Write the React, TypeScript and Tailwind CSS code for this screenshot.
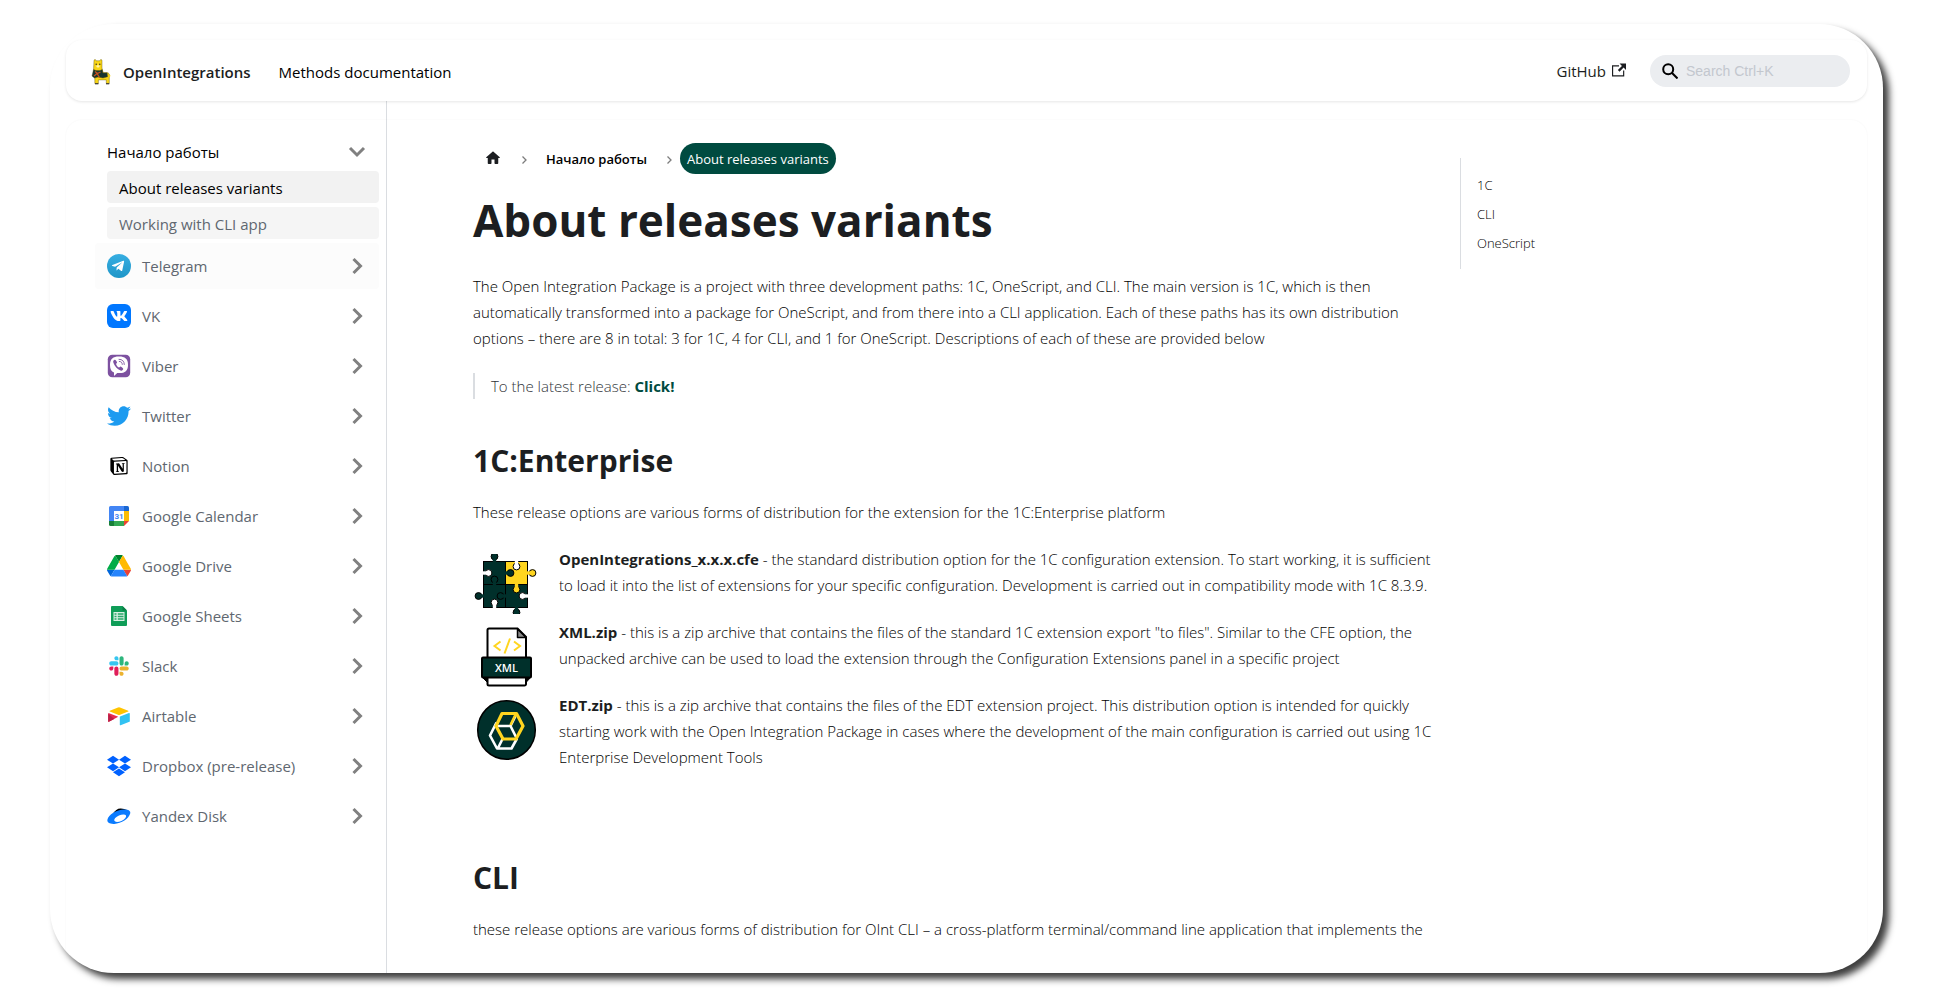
import type { ReactNode } from "react";
import { FaDropbox, FaTelegramPlane, FaTwitter, FaViber, FaVk } from "react-icons/fa";
import { SiNotion } from "react-icons/si";

const DARK = "#00302b";
const YELLOW = "#ffd51f";

function Llama() {
  return (
    <svg viewBox="0 0 20 26" className="h-[26px] w-5" aria-hidden="true">
      <g stroke="#5a4f0a" strokeWidth=".4">
        <path d="M3 1.200l1.200-.9L5 1.800h4l.8-1.500 1.200.9V9l1 4.500 5 .3 1.300 1.200v9.500h-3v-3.600H7.400v3.600H3.800V16L2.600 10z" fill="#f9d616" />
        <path d="M2.500 10.500l2.500 1h4l2.200-1 .8 3.500 4.100-.2.500 4-4.600 1.200-5-1L3.400 19 1 17z" fill="#17352f" />
      </g>
      <path d="M4 12.500l2.500 2 3-1.500M3 17l3-2.500 2.500 4" stroke="#c8501f" strokeWidth="1.300" fill="none" />
      <circle cx="5.200" cy="5.200" r=".7" fill="#222" />
      <circle cx="8.800" cy="5.200" r=".7" fill="#222" />
      <rect x="5.400" y="6.200" width="3.200" height="2.400" rx="1.100" fill="#fff3ae" />
      <path d="M17.800 15.500l1.700 1-.8 2-1.400-.5z" fill="#f7d416" />
      <path d="M4 24.800h3.400M15 24.800h3.200" stroke="#222" strokeWidth="1" />
    </svg>
  );
}

const box = "h-6 w-6 shrink-0";

const icons: Record<string, ReactNode> = {
  Telegram: (
    <span className="flex h-6 w-6 items-center justify-center rounded-full bg-gradient-to-b from-[#37aee2] to-[#1e96c8]">
      <FaTelegramPlane className="mr-0.5 h-3.5 w-3.5 text-white" />
    </span>
  ),
  VK: (
    <span className="flex h-6 w-6 items-center justify-center rounded-md bg-[#0077ff]">
      <FaVk className="h-[18px] w-[18px] text-white" />
    </span>
  ),
  Viber: (
    <svg viewBox="0 0 24 24" className={box}>
      <rect x=".8" y=".8" width="22.400" height="22.400" rx="4.500" fill="#7d51a0" />
      <path d="M12 2.600c-6 0-9 2.400-9 8.400 0 4.300 1.400 6.400 4 7.500v3.400l3.200-3c7 .7 10.800-1.400 10.800-8C21 5 18 2.600 12 2.600z" fill="#fff" />
      <path d="M7.600 5.800c-1.300.7-1.700 1.600-1.200 3 1.300 3.600 3.800 6.300 7.200 7.700 1.200.5 2-.1 2.600-1.300.4-.8-1.700-2.400-2.500-2.700-.8-.2-1 1.100-1.700 1-1.500-.6-2.700-2.100-2.900-3.500 0-.7 1.200-.8.9-1.700-.3-.9-1.500-2.900-2.400-2.500z" fill="#7d51a0" />
      <path d="M12 5.300c3.300 0 5.200 1.800 5.300 5.200M12.300 7.400c1.900.1 2.900 1.100 3 3" stroke="#7d51a0" strokeWidth=".9" fill="none" strokeLinecap="round" />
    </svg>
  ),
  Twitter: <FaTwitter className="h-6 w-6 text-[#1d9bf0]" />,
  Notion: (
    <span className="flex h-6 w-6 items-center justify-center">
      <SiNotion className="h-[18px] w-[18px] text-black" />
    </span>
  ),
  "Google Calendar": (
    <svg viewBox="0 0 24 24" className={box}>
      <path d="M3.500 2H17v5H7v10H2V3.500A1.500 1.500 0 0 1 3.500 2z" fill="#4285f4" />
      <path d="M17 2h3.500A1.500 1.500 0 0 1 22 3.500V7h-5z" fill="#1967d2" />
      <path d="M17 7h5v10h-5z" fill="#fbbc04" />
      <path d="M7 17h10v5H7z" fill="#34a853" />
      <path d="M2 17h5v5H3.500A1.500 1.500 0 0 1 2 20.500z" fill="#188038" />
      <path d="M17 17h5l-5 5z" fill="#ea4335" />
      <path d="M7 7h10v10H7z" fill="#fff" />
      <text x="12" y="15" textAnchor="middle" fontSize="8" fontWeight="700" fontFamily="Roboto, sans-serif" fill="#4285f4">31</text>
    </svg>
  ),
  "Google Drive": (
    <svg viewBox="0 -4 87.3 87.3" className={box}>
      <path d="m6.600 66.850 3.850 6.650c.8 1.400 1.950 2.500 3.300 3.300l13.750-23.800h-27.500c0 1.550.4 3.100 1.200 4.500z" fill="#0066da" />
      <path d="m43.650 25-13.750-23.800c-1.350.8-2.500 1.900-3.300 3.300l-25.400 44a9.060 9.060 0 0 0-1.200 4.500h27.500z" fill="#00ac47" />
      <path d="m73.550 76.800c1.350-.8 2.500-1.900 3.300-3.300l1.600-2.750 7.650-13.250c.8-1.400 1.200-2.950 1.200-4.500h-27.502l5.852 11.500z" fill="#ea4335" />
      <path d="m43.650 25 13.750-23.800c-1.350-.8-2.900-1.200-4.500-1.200h-18.500c-1.600 0-3.150.45-4.500 1.200z" fill="#00832d" />
      <path d="m59.800 53h-32.300l-13.750 23.800c1.350.8 2.900 1.200 4.500 1.200h50.800c1.600 0 3.150-.45 4.500-1.200z" fill="#2684fc" />
      <path d="m73.400 26.500-12.700-22c-.8-1.400-1.950-2.500-3.300-3.300l-13.750 23.800 16.150 28h27.450c0-1.550-.4-3.100-1.200-4.500z" fill="#ffba00" />
    </svg>
  ),
  "Google Sheets": (
    <svg viewBox="0 0 24 24" className={box}>
      <path d="M5 2h10.500L20 6.500V21a1 1 0 0 1-1 1H5a1 1 0 0 1-1-1V3a1 1 0 0 1 1-1z" fill="#0f9d58" />
      <path d="M15.500 2L20 6.500h-4.500z" fill="#0b7f46" />
      <path d="M6.500 8h11v9h-11z" fill="#d9efe3" />
      <path d="M7.500 9.300h2v1.500h-2zM10.800 9.300h5.700v1.500h-5.700zM7.500 11.800h2v1.500h-2zM10.800 11.800h5.700v1.500h-5.700zM7.500 14.300h2v1.500h-2zM10.800 14.300h5.700v1.500h-5.700z" fill="#2aa86b" />
    </svg>
  ),
  Slack: (
    <svg viewBox="-14 -14 151 151" className={box}>
      <path d="M25.800 77.600c0 7.100-5.800 12.900-12.900 12.900S0 84.700 0 77.600s5.800-12.900 12.900-12.900h12.900v12.900zm6.500 0c0-7.100 5.800-12.900 12.900-12.900s12.900 5.800 12.900 12.900v32.300c0 7.100-5.800 12.900-12.900 12.900s-12.900-5.800-12.900-12.900V77.600z" fill="#e01e5a" />
      <path d="M45.200 25.800c-7.100 0-12.900-5.800-12.900-12.900S38.100 0 45.200 0s12.900 5.800 12.900 12.900v12.900H45.200zm0 6.500c7.100 0 12.900 5.800 12.900 12.900s-5.800 12.900-12.900 12.900H12.900C5.800 58.100 0 52.300 0 45.200s5.800-12.900 12.900-12.900h32.300z" fill="#36c5f0" />
      <path d="M97 45.200c0-7.100 5.800-12.900 12.900-12.900s12.900 5.800 12.900 12.900-5.800 12.900-12.900 12.900H97V45.200zm-6.500 0c0 7.100-5.800 12.900-12.900 12.900s-12.900-5.800-12.900-12.900V12.900C64.700 5.800 70.500 0 77.600 0s12.900 5.800 12.900 12.900v32.300z" fill="#2eb67d" />
      <path d="M77.600 97c7.100 0 12.900 5.800 12.900 12.900s-5.800 12.900-12.900 12.900-12.900-5.800-12.900-12.900V97h12.900zm0-6.500c-7.100 0-12.900-5.800-12.900-12.900s5.800-12.900 12.900-12.900h32.300c7.100 0 12.900 5.800 12.900 12.900s-5.800 12.900-12.900 12.900H77.600z" fill="#ecb22e" />
    </svg>
  ),
  Airtable: (
    <svg viewBox="0 0 24 24" className={box}>
      <path d="M2.800 6.700L11 3.500a3 3 0 0 1 2 0l8.200 3.200c.5.200.5.600 0 .8L13 10.800a3 3 0 0 1-2 0L2.800 7.500c-.5-.2-.5-.6 0-.8z" fill="#ffc400" />
      <path d="M13 12.600l9-3.500c.4-.1.800.1.800.5v7.600c0 .3-.1.500-.4.600l-8.800 3.400c-.4.200-.8-.1-.8-.5v-7.500c0-.3 0-.5.200-.6z" fill="#31c2f2" />
      <path d="M10.800 13L1.900 17.700c-.4.200-.7-.1-.7-.5V9.700c0-.5.400-.7.900-.5l8.600 3.300c.3.100.3.300.1.500z" fill="#e8294f" />
      <path d="M7.200 14.900L1.400 18l-.2-.8V9.700z" fill="#ba1e45" />
    </svg>
  ),
  "Dropbox (pre-release)": <FaDropbox className="h-[26px] w-6 text-[#0061ff]" />,
  "Yandex Disk": (
    <svg viewBox="0 0 24 24" className={box}>
      <path d="M6 9.500c2-3 4.500-5.100 7.800-5 2.700 0 4.200.8 6.200 1.600L10 14z" fill="#000" />
      <path d="M.4 15.800c1.200-5 9-10 16.500-10.200 4.500-.1 7 1.400 6.300 4-1.300 5-8.700 10-16 10.300C2.600 20.100 0 18.400.4 15.800z" fill="#0a7bff" />
      <ellipse cx="13.200" cy="14.200" rx="6.400" ry="3" transform="rotate(-24 13.200 14.200)" fill="#fff" />
    </svg>
  ),
};

function Chevron({ open = false }: { open?: boolean }) {
  return (
    <svg viewBox="0 0 24 24" className="h-6 w-6 shrink-0" fill="none" stroke="#808080" strokeWidth="3" aria-hidden="true">
      <path d={open ? "M5 8l7 7 7-7" : "M8.500 5l7 7-7 7"} />
    </svg>
  );
}

function Crumb() {
  return (
    <svg viewBox="0 0 22 12" className="mt-0.5 h-3 w-[22px]" fill="none" stroke="#7c7c7c" strokeWidth="1.300" aria-hidden="true">
      <path d="M9.500 2.500l3.500 3.500-3.500 3.500" />
    </svg>
  );
}

function Knob({ x, y, dx, dy, fill }: { x: number; y: number; dx: number; dy: number; fill: string }) {
  const cx = x + dx * 5;
  const cy = y + dy * 5;
  return (
    <g>
      <circle cx={cx} cy={cy} r="3.400" fill={fill} stroke="#000" strokeWidth="1" />
      <rect
        x={x + dx - (dx ? 2.2 : 1.7)}
        y={y + dy - (dy ? 2.2 : 1.7)}
        width={dx ? 4.4 : 3.4}
        height={dy ? 4.4 : 3.4}
        fill={fill}
      />
    </g>
  );
}

function PuzzleIcon() {
  return (
    <svg viewBox="0 0 64 60" className="h-[60px] w-16" aria-hidden="true">
      <rect x="10.500" y="7.500" width="44" height="46" fill={DARK} stroke="#000" />
      <rect x="32.500" y="7.500" width="22" height="23" fill={YELLOW} stroke="#000" />
      <path d="M10.500 30.500h44M32.500 30.500v23" stroke="#000" />
      <Knob x={21.500} y={7.500} dx={0} dy={-1} fill={DARK} />
      <Knob x={54.500} y={19} dx={1} dy={0} fill={YELLOW} />
      <Knob x={32.500} y={19} dx={1} dy={0} fill={DARK} />
      <Knob x={43.500} y={30.500} dx={0} dy={1} fill={YELLOW} />
      <Knob x={21.500} y={30.500} dx={0} dy={-1} fill={DARK} />
      <Knob x={32.500} y={42} dx={-1} dy={0} fill={DARK} />
      <Knob x={10.500} y={42} dx={-1} dy={0} fill={DARK} />
      <Knob x={43.500} y={53.500} dx={0} dy={1} fill={DARK} />
      <Knob x={10.500} y={19} dx={1} dy={0} fill="#fff" />
      <Knob x={43.500} y={7.500} dx={0} dy={1} fill="#fff" />
      <Knob x={54.500} y={42} dx={-1} dy={0} fill="#fff" />
      <Knob x={21.500} y={53.500} dx={0} dy={-1} fill="#fff" />
    </svg>
  );
}

function XmlIcon() {
  return (
    <svg viewBox="0 0 64 60" className="h-[60px] w-16" aria-hidden="true">
      <path d="M16 1.500h28.500l8.500 8.500V57a1.500 1.500 0 0 1-1.500 1.500H16A1.500 1.500 0 0 1 14.500 57V3A1.500 1.500 0 0 1 16 1.500z" fill="#fff" stroke="#000" strokeWidth="2" />
      <path d="M44.500 2v8.500H53z" fill="#8a8a8a" stroke="#000" strokeWidth="1.500" strokeLinejoin="round" />
      <path d="M9 50h5.500v5.500zM58 50h-5v5.500z" fill="#000" stroke="#000" />
      <rect x="9" y="30.500" width="49" height="20" rx="1" fill={DARK} stroke="#000" strokeWidth="2" />
      <path d="M27.500 14.500l-6 4.500 6 4.500M41 14.500l6 4.500-6 4.500M37 11.500l-5.500 15" fill="none" stroke={YELLOW} strokeWidth="2" />
      <text x="33.500" y="44.500" textAnchor="middle" fontSize="11" fontWeight="600" fontFamily="Open Sans, sans-serif" fill="#fff">XML</text>
    </svg>
  );
}

function EdtIcon() {
  return (
    <svg viewBox="0 0 64 60" className="h-[60px] w-16" aria-hidden="true">
      <ellipse cx="33.500" cy="30" rx="28.800" ry="29.200" fill={DARK} stroke="#000" strokeWidth="1.500" />
      <g fill="none" strokeWidth="3.200" strokeLinejoin="round">
        <path d="M23.500 22.500l-6.500 13 7 13h14.500l5.500-10M24 26h13.500l5.500 11M30 38l-5 10M37.500 26l5-10" stroke="#fff" strokeWidth="2.600" />
        <path d="M29 13.500h14.500l6.500 12.500-7 13H30L23 26z" stroke={YELLOW} />
        <path d="M43 13.500L37.500 25" stroke={YELLOW} strokeWidth="2.500" />
      </g>
    </svg>
  );
}

const services = Object.keys(icons);

const releases = [
  {
    name: "OpenIntegrations_x.x.x.cfe",
    icon: <PuzzleIcon />,
    text: " - the standard distribution option for the 1C configuration extension. To start working, it is sufficient to load it into the list of extensions for your specific configuration. Development is carried out in compatibility mode with 1C 8.3.9.",
  },
  {
    name: "XML.zip",
    icon: <XmlIcon />,
    text: " - this is a zip archive that contains the files of the standard 1C extension export \"to files\". Similar to the CFE option, the unpacked archive can be used to load the extension through the Configuration Extensions panel in a specific project",
  },
  {
    name: "EDT.zip",
    icon: <EdtIcon />,
    text: " - this is a zip archive that contains the files of the EDT extension project. This distribution option is intended for quickly starting work with the Open Integration Package in cases where the development of the main configuration is carried out using 1C Enterprise Development Tools",
  },
];

function Header() {
  return (
    <header className="relative z-10 flex h-[61px] shrink-0 items-center justify-between rounded-2xl bg-white pr-[17px] pl-[25px] shadow-[0_1px_3px_rgba(0,0,0,0.1)]">
      <div className="flex items-center pt-0.5">
        <a href="#" className="flex items-center gap-3 font-semibold text-[#1c1e21]">
          <Llama />
          OpenIntegrations
        </a>
        <a href="#methods" className="ml-7 text-black">Methods documentation</a>
      </div>
      <div className="flex items-center gap-6">
        <a href="#github" className="flex items-center gap-1.5 font-medium text-[#1c1e21]">
          GitHub
          <svg viewBox="0 0 24 24" className="mb-0.5 h-3.5 w-3.5" fill="currentColor" aria-hidden="true">
            <path d="M21 13v10h-21v-19h12v2h-10v15h17v-8h2zm3-12h-10.988l4.035 4-6.977 7.070 2.828 2.828 6.977-7.070 4.125 4.172v-11z" />
          </svg>
        </a>
        <label className="flex h-8 w-[200px] items-center gap-2 rounded-full bg-[#ebedf0] pr-2 pl-3">
          <svg viewBox="0 0 16 16" className="h-4 w-4 shrink-0" fill="none" stroke="#000" strokeWidth="2" aria-label="Search">
            <circle cx="6.200" cy="6.200" r="5" />
            <path d="M9.800 9.800l5.700 5.700" />
          </svg>
          <input
            type="search"
            placeholder="Search Ctrl+K"
            className="w-full min-w-0 bg-transparent font-['Liberation_Sans',sans-serif] text-sm outline-none placeholder:text-[#c3c7ce]"
          />
        </label>
      </div>
    </header>
  );
}

function Sidebar() {
  return (
    <nav className="w-[321px] shrink-0 border-r border-[#dadde1] pt-9 pr-[7px] pl-[29px]">
      <ul className="flex flex-col gap-1">
        <li>
          <button type="button" className="flex h-[30px] w-full items-center justify-between pr-2.5 pl-3 text-black">
            Начало работы
            <Chevron open />
          </button>
          <ul className="mt-1 ml-3 flex flex-col gap-1">
            <li>
              <a href="#about" className="flex h-8 items-center rounded bg-[#f2f2f2] px-3 pt-0.5 text-black">About releases variants</a>
            </li>
            <li>
              <a href="#cli-app" className="flex h-8 items-center rounded bg-[#f5f5f5] px-3 pt-0.5 text-[#606770]">Working with CLI app</a>
            </li>
          </ul>
        </li>
        {services.map((name, i) => (
          <li key={name}>
            <button
              type="button"
              className={`flex h-[46px] w-full items-center rounded pr-2.5 pl-3 text-[#606770] ${i === 0 ? "bg-[#fcfcfc]" : ""}`}
            >
              {icons[name]}
              <span className="ml-[11px] flex-1 text-left">{name}</span>
              <Chevron />
            </button>
          </li>
        ))}
      </ul>
    </nav>
  );
}

function Article() {
  return (
    <article className="font-light text-black">
      <nav aria-label="Breadcrumbs" className="flex h-[31px] items-center text-[13px]">
        <a href="#" aria-label="Home" className="flex w-10 justify-center text-[#1c1e21]">
          <svg viewBox="0 0 24 24" className="mb-0.5 h-[18px] w-[18px]" fill="currentColor">
            <path d="M10 19v-5h4v5c0 .55.45 1 1 1h3c.55 0 1-.45 1-1v-7h1.700c.46 0 .68-.57.33-.87L12.670 3.600c-.38-.34-.96-.34-1.340 0l-8.360 7.530c-.34.3-.13.87.33.87H5v7c0 .55.45 1 1 1h3c.55 0 1-.45 1-1z" />
          </svg>
        </a>
        <Crumb />
        <a href="#start" className="px-[11px] font-semibold text-black">Начало работы</a>
        <Crumb />
        <span className="flex h-[31px] items-center rounded-full bg-[#004b40] px-[7px] font-normal text-white">About releases variants</span>
      </nav>
      <h1 className="mt-4 mb-[23px] text-[44px] leading-[60px] font-bold text-[#1c1e21]">About releases variants</h1>
      <p className="mb-[22px]">
        The Open Integration Package is a project with three development paths: 1C, OneScript, and CLI. The main version is 1C, which is then automatically transformed into a package for OneScript, and from there into a CLI application. Each of these paths has its own distribution options – there are 8 in total: 3 for 1C, 4 for CLI, and 1 for OneScript. Descriptions of each of these are provided below
      </p>
      <blockquote className="mb-[42px] border-l-2 border-[#dadde1] pl-4 text-[#303438]">
        To the latest release: <a href="#release" className="font-bold text-[#004b40]">Click!</a>
      </blockquote>
      <h2 className="mb-[18px] text-[30px] leading-10 font-bold text-[#1c1e21]">1C:Enterprise</h2>
      <p className="mb-[21px]">These release options are various forms of distribution for the extension for the 1C:Enterprise platform</p>
      <ul>
        {releases.map((r) => (
          <li key={r.name} className="flex gap-[22px] pb-[21px]">
            <div className="h-[52px] shrink-0 pt-2">{r.icon}</div>
            <p><strong className="font-bold text-[#1c1e21]">{r.name}</strong>{r.text}</p>
          </li>
        ))}
      </ul>
      <h2 className="mt-[67px] mb-[18px] text-[30px] leading-10 font-bold text-[#1c1e21]">CLI</h2>
      <p>these release options are various forms of distribution for OInt CLI – a cross-platform terminal/command line application that implements the</p>
    </article>
  );
}

export default function App() {
  return (
    <div className="h-screen overflow-hidden bg-white pt-6 pr-[51px] pb-7 pl-[50px] font-['Open_Sans','Noto_Sans',sans-serif] text-[15px] leading-[26px] text-[#1c1e21]">
      <div className="flex h-full flex-col rounded-[64px] bg-white shadow-[6px_6px_7px_rgba(0,0,0,0.76)]">
        <div className="flex min-h-0 flex-1 flex-col overflow-hidden rounded-[64px] px-4 pt-4">
          <Header />
          <div className="relative flex min-h-0 flex-1">
            <div className="pointer-events-none absolute inset-x-0 top-[19px] bottom-0 rounded-t-2xl shadow-[0_0_2px_rgba(0,0,0,0.05)]" />
            <Sidebar />
            <main className="min-w-0 flex-1 pt-[42px]">
              <div className="mx-auto grid max-w-[1308px] grid-cols-[3fr_1fr] gap-6">
                <Article />
                <nav aria-label="On this page" className="mt-[15px] self-start border-l border-[#dadde1] pt-[13px] pb-[11px] pl-4 text-[13px] leading-[29px] font-light text-black">
                  <ul>
                    <li><a href="#1c" className="block">1C</a></li>
                    <li><a href="#cli" className="block">CLI</a></li>
                    <li><a href="#onescript" className="block">OneScript</a></li>
                  </ul>
                </nav>
              </div>
            </main>
          </div>
        </div>
      </div>
    </div>
  );
}
